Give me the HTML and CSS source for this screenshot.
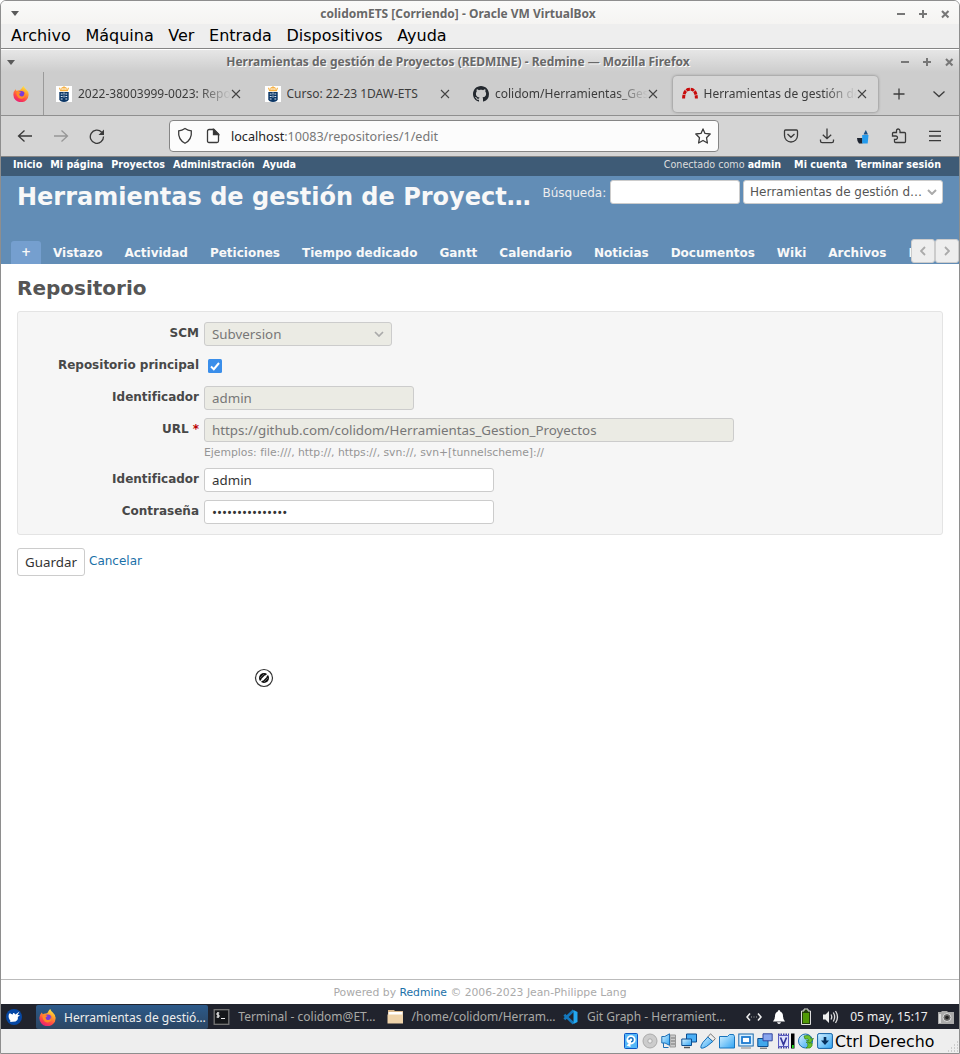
FILE: index.html
```html
<!DOCTYPE html>
<html lang="es">
<head>
<meta charset="utf-8">
<title>colidomETS [Corriendo] - Oracle VM VirtualBox</title>
<link rel="stylesheet" href="styles.css">
</head>
<body>
<svg class="defs" width="0" height="0">
  <defs>
    <linearGradient id="ff" x1="0.8" y1="0" x2="0.3" y2="1"><stop offset="0" stop-color="#fff04a"/><stop offset=".35" stop-color="#ffa32b"/><stop offset=".7" stop-color="#ff4a45"/><stop offset="1" stop-color="#e81e78"/></linearGradient>
    <linearGradient id="blue" x1="0" y1="0" x2="1" y2="1"><stop offset="0" stop-color="#d8f2ff"/><stop offset="1" stop-color="#2fa4f4"/></linearGradient>
    <symbol id="firefox" viewBox="0 0 16 16"><path d="M2.6 3.2 3.6 5Q5 3.9 6.600 4.300Q8.600 3.500 8.700 2.300Q9.600.9 10.600 0Q11.300 2 13 3.200Q15.900 5.600 15.600 9.100A7.600 7.300 0 0 1 .4 8.700Q.3 5.400 2.600 3.200Z" fill="url(#ff)"/><circle cx="8.300" cy="8.600" r="3.500" fill="#7b3bd8"/><path d="M3.200 6.200Q5.500 5 8.100 6.500L6.300 7.800Q6.200 10.500 9.200 10.400Q11.800 9.600 11 6.400Q13.200 9 11.300 11.400Q8.500 14 5.300 11.800Q3.100 9.500 3.200 6.200Z" fill="#ff8b25"/></symbol>
    <symbol id="crest" viewBox="0 0 16 16"><path fill="#fff" d="M0 0h16v16H0z"/><path d="M3.500 1.700 4.600 4.600h6.800l1.100-2.900M5.900 4V2L8 .8l2.100 1.200v2M8 .8v3.500" fill="none" stroke="#f5ae3d" stroke-width="1.100"/><path d="M3.300 6h9.400v7.500Q12 15.500 8 16Q4 15.500 3.300 13.500Z" fill="#0c3766"/><path d="M4.800 8h1.800m2.800 0h1.800M4.800 10.500h1.800m2.800 0h1.800M4.800 13h1.800m2.800 0h1.800M8 6.500v2m0 1v2" stroke="#dce5ef"/></symbol>
    <symbol id="close" viewBox="0 0 10 10"><path d="m1 1 8 8M9 1 1 9" fill="none" stroke="#444" stroke-width="1.100"/></symbol>
    <symbol id="winbtns" viewBox="0 0 54 10"><path d="M1 5h8M23 5h8M27 1v8" stroke="#777" stroke-width="2"/><path d="m46 2 6.500 6.500M52.500 2 46 8.500" stroke="#777" stroke-width="2.100"/></symbol>
  </defs>
</svg>
<div class="window">
  <header class="vb-title">
    <i class="tri"></i><span class="wt">colidomETS [Corriendo] - Oracle VM VirtualBox</span>
    <svg class="wb" width="54" height="10"><use href="#winbtns"/></svg>
  </header>
  <nav class="vb-menu"><span>Archivo</span><span>Máquina</span><span>Ver</span><span>Entrada</span><span>Dispositivos</span><span>Ayuda</span></nav>

  <div class="ff-title">
    <i class="tri"></i><span class="wt">Herramientas de gestión de Proyectos (REDMINE) - Redmine — Mozilla Firefox</span>
    <svg class="wb" width="54" height="10"><use href="#winbtns"/></svg>
  </div>
  <div class="tabs">
    <div class="pin"><svg width="16" height="16"><use href="#firefox"/></svg></div>
    <div class="tab"><svg width="16" height="16"><use href="#crest"/></svg><span class="fade">2022-38003999-0023: Repo</span><svg width="10" height="10"><use href="#close"/></svg></div>
    <div class="tab"><svg width="16" height="16"><use href="#crest"/></svg><span>Curso: 22-23 1DAW-ETS</span><svg width="10" height="10"><use href="#close"/></svg></div>
    <div class="tab"><svg width="16" height="16" viewBox="0 0 16 16"><path fill="#24292f" d="M8 0C3.580 0 0 3.580 0 8c0 3.540 2.290 6.530 5.470 7.590.4.070.55-.17.55-.38 0-.19-.01-.82-.01-1.490-2.010.37-2.530-.49-2.690-.94-.09-.23-.48-.94-.82-1.130-.28-.15-.68-.52-.01-.53.63-.01 1.080.58 1.230.82.72 1.210 1.870.87 2.330.66.070-.52.28-.87.51-1.070-1.780-.2-3.640-.89-3.640-3.950 0-.87.31-1.590.82-2.150-.08-.2-.36-1.020.08-2.120 0 0 .67-.21 2.200.82.64-.18 1.320-.27 2-.27s1.360.09 2 .27c1.530-1.040 2.200-.82 2.200-.82.44 1.100.16 1.920.08 2.120.51.56.82 1.270.82 2.150 0 3.070-1.870 3.750-3.650 3.950.29.25.54.73.54 1.480 0 1.070-.01 1.930-.01 2.200 0 .21.15.46.55.38A8.010 8.010 0 0 0 16 8c0-4.420-3.580-8-8-8Z"/></svg><span class="fade">colidom/Herramientas_Ges</span><svg width="10" height="10"><use href="#close"/></svg></div>
    <div class="tab active"><svg width="16" height="16" viewBox="0 0 16 16"><path d="M1.600 12.500Q1.800 3.300 8 3.300T14.400 12.500" fill="none" stroke="#c80a0a" stroke-width="3" stroke-dasharray="3.700 .7"/></svg><span class="fade">Herramientas de gestión de</span><svg width="10" height="10"><use href="#close"/></svg></div>
    <div class="tabtool"><svg width="12" height="12" viewBox="0 0 12 12"><path d="M6 .5v11M.5 6h11" stroke="#3c3c3c" stroke-width="1.300"/></svg></div>
    <div class="tabtool"><svg width="12" height="8" viewBox="0 0 12 8"><path d="m.5 1.500 5.500 5 5.500-5" fill="none" stroke="#3c3c3c" stroke-width="1.300"/></svg></div>
  </div>
  <div class="toolbar">
    <div class="nav">
      <svg width="16" height="16" viewBox="0 0 16 16"><path d="M15 8H1.500M7.500 2.500 1.500 8l6 5.500"/></svg>
      <svg class="dim" width="16" height="16" viewBox="0 0 16 16"><path d="M1 8h13.500M8.500 2.500l6 5.500-6 5.500"/></svg>
      <svg width="16" height="16" viewBox="0 0 16 16"><path d="M14.500 8.500A6.600 6.600 0 1 1 12.700 4.200"/><path d="M15 1.500V7H9.500Z" fill="#3a3a3a" stroke="none"/></svg>
    </div>
    <div class="urlbar">
      <svg width="16" height="18" viewBox="0 0 16 18"><path d="M8 1.500Q5 3.500 1.700 3.800Q.8 12.500 8 16.300Q15.200 12.500 14.300 3.800Q11 3.500 8 1.500Z"/></svg>
      <svg width="14" height="16" viewBox="0 0 14 16"><path d="M1.500 3.200Q1.500 1.500 3.200 1.500H8l4.500 4.500v7Q12.500 14.500 11 14.500H3Q1.500 14.500 1.500 13Z"/><path d="M7.500 1.500 12.500 6.500h-5Z" fill="#333"/></svg>
      <span class="url"><b>localhost</b>:10083/repositories/1/edit</span>
      <svg width="16" height="16" viewBox="0 0 16 16"><path d="m8 .9 2 4.500 5.200.6-3.700 3.700.9 5.300L8 12.500 3.600 15l.9-5.300L.8 6 6 5.400Z" stroke-linejoin="round"/></svg>
    </div>
    <div class="nav tools">
      <svg width="16" height="16" viewBox="0 0 16 16"><path d="M2.500 2h11Q14.500 2 14.500 3v4.500a6.500 6.500 0 0 1-13 0V3Q1.500 2 2.500 2ZM4.500 6 8 9.300 11.500 6"/></svg>
      <svg width="16" height="16" viewBox="0 0 16 16"><path d="M8 .5v10M3.800 6.700 8 10.700l4.200-4M1.500 11.500V13Q1.500 14.700 3.200 14.700h9.600q1.700 0 1.700-1.700v-1.500"/></svg>
      <svg width="16" height="16" viewBox="0 0 16 16"><path d="M2 10h5.500v5.500H4Q2 13.500 2 10Z" fill="#1e2430" stroke="none"/><path d="M7.200 7h6.300l-.8 8.500H7.200Z" fill="#249bed" stroke="none"/><path d="M8.500 6.500 10.800 2l2.200 4.500Z" fill="#174f86" stroke="none"/></svg>
      <svg width="16" height="16" viewBox="0 0 16 16"><path d="M5.500 4.500V3Q5.500 1 7.200 1T9 3v1.500h4.500q1 0 1 1v8q0 1-1 1h-9q-1 0-1-1v-2.200h1.800Q6.500 10.800 6.500 9.500T5 8H1.500V5.500q0-1 1-1Z"/></svg>
      <svg width="16" height="16" viewBox="0 0 16 16"><path d="M2 3.300h12M2 8h12M2 12.700h12"/></svg>
    </div>
  </div>

  <div class="topmenu">
    <div class="links"><a>Inicio</a><a>Mi página</a><a>Proyectos</a><a>Administración</a><a>Ayuda</a></div>
    <div class="logged">Conectado como <b>admin</b></div>
    <div class="links"><a>Mi cuenta</a><a>Terminar sesión</a></div>
  </div>
  <div class="head">
    <div class="headrow">
      <h1>Herramientas de gestión de Proyect…</h1>
      <label>Búsqueda:</label><div class="search"></div>
      <div class="jump"><span>Herramientas de gestión d…</span><svg width="10" height="6" viewBox="0 0 10 6"><path d="m1 1 4 4 4-4" fill="none" stroke="#aaa" stroke-width="2"/></svg></div>
    </div>
    <div class="mainmenu">
      <a class="plus">+</a><a>Vistazo</a><a>Actividad</a><a>Peticiones</a><a>Tiempo dedicado</a><a>Gantt</a><a>Calendario</a><a>Noticias</a><a>Documentos</a><a>Wiki</a><a>Archivos</a><a>Repositorio</a>
      <div class="scroll"><i><svg width="6" height="10" viewBox="0 0 6 10"><path d="M5 1 1 5l4 4" fill="none" stroke="#aaa" stroke-width="1.800"/></svg></i><i><svg width="6" height="10" viewBox="0 0 6 10"><path d="m1 1 4 4-4 4" fill="none" stroke="#aaa" stroke-width="1.800"/></svg></i></div>
    </div>
  </div>
  <main>
    <h2>Repositorio</h2>
    <form class="box">
      <div class="row"><label>SCM</label><div class="field off scm"><span>Subversion</span><svg width="10" height="6" viewBox="0 0 10 6"><path d="m1 1 4 4 4-4" fill="none" stroke="#aaa" stroke-width="1.700"/></svg></div></div>
      <div class="row"><label>Repositorio principal</label><svg class="check" width="14" height="14" viewBox="0 0 14 14"><rect width="14" height="14" rx="1.500" fill="#3a8eea"/><path d="M3 7.500 5.800 10.200 11 4" fill="none" stroke="#fff" stroke-width="2"/></svg></div>
      <div class="row"><label>Identificador</label><div class="field off ident">admin</div></div>
      <div class="row"><label>URL <em>*</em></label><div class="field off url-in">https://github.com/colidom/Herramientas_Gestion_Proyectos</div></div>
      <p class="hint">Ejemplos: file:///, http://, https://, svn://, svn+[tunnelscheme]://</p>
      <div class="row"><label>Identificador</label><div class="field">admin</div></div>
      <div class="row"><label>Contraseña</label><div class="field">•••••••••••••••</div></div>
    </form>
    <div class="actions"><div class="btn">Guardar</div><a>Cancelar</a></div>
    <svg class="cursor" width="20" height="20" viewBox="0 0 20 20"><circle cx="10" cy="10" r="8.500" fill="#fff" stroke="#333" stroke-width="1.200"/><circle cx="10" cy="10" r="5" fill="#111"/><path d="m8 12 4-4" stroke="#fff" stroke-width="5.500"/><path d="m6 11.200 5.200-5.200M8.800 14 14 8.800" stroke="#111" stroke-width="1.500"/><path d="m6 14 8-8" stroke="#fff" stroke-width="1.300"/></svg>
  </main>
  <footer class="foot">Powered by <a>Redmine</a> © 2006-2023 Jean-Philippe Lang</footer>

  <div class="taskbar">
    <div class="start"><svg width="16" height="16" viewBox="0 0 16 16"><circle cx="8" cy="8" r="8" fill="#0648a5"/><path d="M3 5Q4 3.500 5.200 5L7 5.500Q6.500 3.500 8 4L9.500 5.500 13.500 2.500 11.500 6 14 6.300 11.800 8Q12.500 11.500 9.500 12.500L4 13Q5 11.500 3.500 10.500Q2 8 3 5Z" fill="#fff"/></svg></div>
    <div class="task on"><svg width="17" height="17"><use href="#firefox"/></svg><span>Herramientas de gestió…</span></div>
    <div class="task"><svg width="16" height="16" viewBox="0 0 16 16"><rect x=".7" y=".7" width="14.600" height="14.600" fill="#15171a" stroke="#777" stroke-width="1.300"/><path d="M5.800 4H3.500v2h2v2H3M4.500 3v6M7.500 9.500h4" fill="none" stroke="#eee"/></svg><span>Terminal - colidom@ET…</span></div>
    <div class="task folder"><svg width="17" height="16" viewBox="0 0 17 16"><path d="M1 1h6l1 1h8v4H1Z" fill="#d9b98e"/><path d="M1.500 3h14v4h-14Z" fill="#fff"/><path d="M.5 5.500h15.500V14.500H.5Z" fill="#eed3aa"/></svg><span>/home/colidom/Herram…</span></div>
    <div class="task"><svg width="16" height="16" viewBox="0 0 16 16"><path d="M11 1.500 1.800 10.300M11 14.500 1.800 5.700" stroke="#1478bd" stroke-width="2.600"/><path d="M11 1 15 3v10l-4 2Z" fill="#23a8f2"/></svg><span>Git Graph - Herramient…</span></div>
    <div class="tray">
      <svg class="net" width="16" height="16" viewBox="0 0 16 16"><path d="M4 4.500 1 8l3 3.500M12 4.500 15 8l-3 3.500" fill="none" stroke="#eee" stroke-width="1.600"/><path d="M5 8h1m1.500 0h1M10 8h1" stroke="#aaa"/></svg>
      <svg class="bell" width="14" height="16" viewBox="0 0 14 16"><path d="M7 1Q8.200 1 8.200 2.500Q11 3.500 11 7Q11 10.500 13 12.500H1Q3 10.500 3 7Q3 3.500 5.800 2.500Q5.800 1 7 1ZM5 13.300h4Q8.500 15 7 15T5 13.300Z" fill="#fff"/></svg>
      <svg width="12" height="18" viewBox="0 0 12 18"><path d="M4 1h4v2h2.500v13.500h-9V3H4Z" fill="#24400c" stroke="#ddd"/><path d="M3 5h6v10H3Z" fill="#509a06"/></svg>
      <svg class="vol" width="18" height="16" viewBox="0 0 18 16"><path d="M1 5.500h2.500L7 2v12l-3.500-3.500H1Z" fill="#eee"/><path d="M9 5.500Q10.500 8 9 10.500M11.300 3.500Q14 8 11.300 12.500M13.500 2Q17.500 8 13.500 14" fill="none" stroke="#ddd" stroke-width="1.300"/></svg>
      <span class="clock">05 may, 15:17</span>
      <svg width="16" height="14" viewBox="0 0 16 14"><path d="M0 2h3l1-1h5l1 1h6v12H0Z" fill="#aaa"/><path d="M1 4h2v9H1z" fill="#ddd"/><circle cx="9" cy="7.500" r="4" fill="#666" stroke="#ddd"/><circle cx="9" cy="7.500" r="1.800" fill="#222"/></svg>
    </div>
  </div>
  <div class="status">
    <svg viewBox="0 0 16 16"><rect x="1.500" y=".5" width="13" height="15" rx="1" fill="#54b7f7" stroke="#0b55c5"/><circle cx="8" cy="6.800" r="4.600" fill="#fff"/><path d="M8 6.800m-2 0a2 2 0 1 1 2 2" fill="none" stroke="#1772c0" stroke-width="1.500"/><path d="m3.500 12.500 4-3.500v5Z" fill="#fff"/></svg>
    <svg viewBox="0 0 16 16"><circle cx="8" cy="8" r="7" fill="#ccc" stroke="#aaa"/><circle cx="8" cy="8" r="2.200" fill="#eee" stroke="#aaa"/></svg>
    <svg viewBox="0 0 16 16"><path d="M9 2h5.500v12H9Z" fill="#ccc" stroke="#999"/><path d="M10 5h4m-4 3h4m-4 3h4" stroke="#777"/><path d="M.8 3.500h3L8.500.8v11.500L4 10H.8Z" fill="url(#blue)" stroke="#1c6fb5"/><path d="M2.500 10v4.500h5" fill="none" stroke="#1c6fb5"/></svg>
    <svg viewBox="0 0 16 16"><path d="M5.500 1h10v8h-10Z" fill="#4aaef5" stroke="#0b4d90"/><path d="M.8 6h9.700v6.500H.8Z" fill="url(#blue)" stroke="#0b4d90"/><path d="M3 14.500h6" stroke="#555" stroke-width="1.500"/></svg>
    <svg viewBox="0 0 16 16"><path d="M10.500.8 15.300 5.500l-2.500 3L7.800 4Z" fill="#eee" stroke="#777"/><path d="M7.800 4 12.800 8.500 6.500 13.500Q2 16 1 15T2.800 9.500Z" fill="url(#blue)" stroke="#1670b9"/></svg>
    <svg viewBox="0 0 16 16"><path d="M.5 15V3.500h8l2-2h4l1 2V15Z" fill="url(#blue)" stroke="#1874bd"/></svg>
    <svg viewBox="0 0 16 16"><rect x=".8" y="1" width="14.400" height="12" fill="#d7efff" stroke="#1b68aa"/><rect x="4" y="4" width="8" height="6" fill="#fff" stroke="#1d7ad0" stroke-width="1.800"/><path d="M3 15h10" stroke="#888"/></svg>
    <svg viewBox="0 0 16 16"><path d="M.8 5.500H11V13.500H.8Z" fill="#42a8ec" stroke="#0b4d90"/><path d="M6 .8h9.200v7H6Z" fill="#8aa6ee" stroke="#3548a0"/><path d="M3 15.200h7" stroke="#555"/></svg>
    <svg class="cpu" viewBox="0 0 18 16"><path d="M1 2h11M1 14h11" stroke="#4143a3" stroke-width="3" stroke-dasharray="1.500 1"/><path d="M1.500 2.500h10v11h-10Z" fill="#dfe2fb" stroke="#5a5cc0"/><path d="m3.500 4.500 3 7 3-7" fill="none" stroke="#34369a" stroke-width="1.700"/><path d="M14 .5h3.500v15H14Z" fill="#000"/><path d="M15 12h1.800v3H15Z" fill="#20e020"/></svg>
    <svg viewBox="0 0 16 16"><circle cx="7.500" cy="8" r="7" fill="url(#blue)" stroke="#2070b0"/><path d="M6 3Q13 1 13 6l2.500-.5-3.500 5-3.500-3H11Q11 5 7 6Zm2 6q4 3 0 6h4q3-2 2-5Z" fill="#6cc32c" stroke="#37811a" stroke-width=".7"/></svg>
    <svg viewBox="0 0 16 16"><rect x=".6" y=".6" width="14.800" height="14.800" rx="1.500" fill="url(#blue)" stroke="#1260a4"/><path d="M8 4V8" stroke="#062f5c" stroke-width="2.600"/><path d="M4 7.500h8L8 12Z" fill="#062f5c"/></svg>
    <span>Ctrl Derecho</span>
    <svg class="grip" viewBox="0 0 12 12"><path d="M1 11h1m2 0h1m2 0h1m2 0h1M4 8h1m2 0h1m2 0h1M7 5h1m2 0h1m-1-3h1" stroke="#aaa"/></svg>
  </div>
</div>
</body>
</html>
```
FILE: styles.css
```css
*{box-sizing:border-box}
body{margin:0;background:#fff;font:12px "DejaVu Sans",sans-serif;color:#484848}
.defs{display:block;height:0}
svg{flex:none;display:block}
.window{width:960px;height:1054px;border:1px solid #8e8e8e;border-radius:6px 6px 0 0;display:flex;flex-direction:column;overflow:hidden;position:relative}
.vb-title,.ff-title{flex:none;display:flex;align-items:center;font:700 12px/16px "Noto Sans",sans-serif;color:#686868;text-shadow:1px 1px 0 #fff}
.vb-title{height:23px;background:linear-gradient(#fafaf9,#f5f4f2);padding:2px 9px 0 10px}
.ff-title{height:23px;background:linear-gradient(#e6e6e6,#cdcdcd);border-top:1px solid #fff;padding:2px 5px 0 6px}
.tri{border:4px solid transparent;border-top:5px solid #5a5a5a;border-bottom:0}
.wt{flex:1;text-align:center;white-space:nowrap}
.vb-title .wt{padding-left:1px}
.ff-title .wt{padding-left:1px}
.vb-menu{flex:none;height:25px;background:#eee;border-bottom:1px solid #858585;font-size:16px;line-height:24px;color:#000;display:flex;gap:14.600px;padding-left:10px}

.tabs{flex:none;height:44px;background:#cdcdcd;border-bottom:1px solid #8f8f8f;display:flex;font:12px/18px "Noto Sans",sans-serif;color:#3c3c3c}
.pin{flex:none;width:43px;border-right:1px solid #9a9a9a;display:flex;align-items:center;padding-left:12px;margin-right:1.250px}
.tab{flex:none;width:205px;height:36px;margin:4px 1.750px;padding:0 11px 0 9px;display:flex;align-items:center;border-radius:4px}
.tab span{flex:1;min-width:0;margin-left:6px;overflow:hidden;white-space:nowrap}
.tab .fade{-webkit-mask-image:linear-gradient(to left,transparent,#000 32px);mask-image:linear-gradient(to left,transparent,#000 32px)}
.tab.active{background:#d6d6d6;box-shadow:0 0 3px #777}
.tabtool{flex:none;width:40px;display:flex;align-items:center;justify-content:center}
.toolbar{flex:none;height:41px;background:#d5d5d5;border-bottom:1px solid #858585;display:flex;align-items:center}
.nav{display:flex;gap:20px;padding-left:16px;width:168px}
.nav svg,.urlbar svg{fill:none;stroke:#3a3a3a;stroke-width:1.300}
.nav .dim{opacity:.4}
.nav.tools{padding-left:64px;width:240px}
.urlbar{width:550px;height:32px;background:#fcfcfc;border:1px solid #858585;border-radius:4px;display:flex;align-items:center;padding:0 7px}
.url{flex:1;font:12.600px/18px "Noto Sans",sans-serif;color:#777;margin-left:11px;padding-top:2px}
.url b{font-weight:400;color:#222}
.urlbar svg + svg{margin-left:13px}

.topmenu{flex:none;height:19px;background:#3e5b76;color:#fff;font-size:9.600px;line-height:15px;display:flex;padding:0 18px 0 12px}
.links{display:flex;gap:8px;font-weight:700}
.logged{margin-left:auto;margin-right:13px;color:#ddd}
.logged b{color:#fff}
.head{flex:none;height:88px;background:#628db6;color:#f8f8f8;display:flex;flex-direction:column;justify-content:space-between}
.headrow{display:flex;padding:4px 16px 0}
h1{margin:0;font-size:24px;line-height:34px;width:525.500px;white-space:nowrap}
.headrow label{line-height:26px;width:67.500px;color:#eee}
.search{width:130px;height:24px;background:#fff;border:1px solid #ccc;border-radius:3px;margin-right:3px}
.jump{flex:1;height:24px;background:#fff;border:1px solid #ccc;border-radius:3px;display:flex;align-items:center;justify-content:space-between;padding:0 5px 0 6px;color:#555;white-space:nowrap;line-height:22px}
.mainmenu{height:25px;padding:2px 0 0 10px;display:flex;gap:2px;font-weight:700;line-height:24px;position:relative;overflow:hidden;white-space:nowrap}
.mainmenu a{padding:0 10px}
.mainmenu .plus{background:#759fcf;border-radius:3px 3px 0 0;color:#f8f8f8;width:30px;text-align:center;font-size:12px;line-height:23px}
.scroll{position:absolute;right:0;top:0;display:flex}
.scroll i{width:24px;height:24px;background:#eee;border:1px solid #ccc;border-radius:3px;display:flex;align-items:center;justify-content:center}

main{flex:1;background:#fff;padding:0 16px;position:relative}
h2{margin:0;font-size:20px;line-height:24px;padding:12px 0 11px;color:#555}
.box{height:224px;background:#f6f6f6;border:1px solid #e4e4e4;border-radius:3px;padding-top:10px}
.row{display:flex;height:32px}
.row label{width:181px;text-align:right;font-weight:700;line-height:22px;margin-right:5px;white-space:nowrap}
.row em{color:#b00;font-style:normal}
.field{width:290px;height:24px;background:#fff;border:1px solid #ccc;border-radius:3px;padding:0 7px;font:13.333px/22px "Noto Sans",sans-serif;color:#333;white-space:nowrap}
.off{background:#ebebe4;color:#777}
.scm{width:188px;display:flex;justify-content:space-between;align-items:center;line-height:24px}
.ident{width:210px}
.url-in{width:530px}
.check{margin:5px 0 0 4px}
.hint{margin:-4px 0 0 186px;height:22px;line-height:13px;font-size:10.800px;color:#959595}
.actions{display:flex;gap:4px;margin-top:13px}
.actions a,.foot a{color:#1a70a8}
.actions a{line-height:26px}
.btn{width:68px;height:28px;border:1px solid #ccc;border-radius:3px;text-align:center;font:13.333px/27px "Noto Sans",sans-serif;color:#333}
.cursor{position:absolute;left:253px;top:404px}
.foot{flex:none;height:25px;border-top:1px solid #bbb;background:#fff;text-align:center;font-size:10.800px;line-height:25px;color:#aaa}

.taskbar{flex:none;height:25px;background:#20232d;display:flex;font:12px/24px "Noto Sans",sans-serif;color:#a9a9a6}
.start{flex:none;width:35px;padding:5px 0 0 5px}
.task{flex:none;width:172px;margin-right:2.300px;padding-left:3px;display:flex;align-items:center;white-space:nowrap;border-radius:2px}
.task svg{width:17px}
.task span{margin-left:8px}
.task.folder{padding-left:2px}
.task.on{background:linear-gradient(#2c5a8a,#2c4663);color:#eee;margin-top:1px;line-height:23px}
.tray{flex:1;display:flex;align-items:center;gap:10px;color:#eee;padding:0 5px 0 13px}
.bell{margin-right:4px}
.clock{white-space:nowrap;flex:1}
.status{flex:none;height:24px;background:#eee;display:flex;align-items:center;padding-left:622px;gap:3.200px;color:#000;font-size:15.800px}
.status svg{width:16px;height:16px}
.status .cpu{width:18px}
.status span{white-space:nowrap;margin-left:-1px}
.status .grip{width:12px;height:12px;margin:10px 0 0 auto}
```
